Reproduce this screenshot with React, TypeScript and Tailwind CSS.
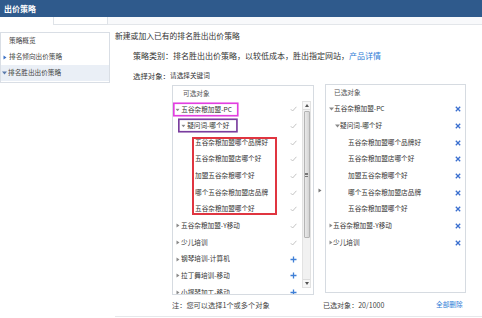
import React from "react";

const leftRows = [
  "五谷杂粮加盟哪个品牌好",
  "五谷杂粮加盟店哪个好",
  "加盟五谷杂粮哪个好",
  "哪个五谷杂粮加盟店品牌",
  "五谷杂粮加盟哪个好",
];

const moreRows = [
  { text: "五谷杂粮加盟-Y移动", added: true },
  { text: "少儿培训", added: true },
  { text: "钢琴培训-计算机", added: false },
  { text: "拉丁舞培训-移动", added: false },
  { text: "小提琴加工-移动", added: false },
];

function T({ children }: { children: React.ReactNode }) {
  return (
    <span className="inline-block origin-left scale-[0.83] whitespace-nowrap text-[8px] leading-[10px]">
      {children}
    </span>
  );
}

function TriDown({ color = "#8a8a8a" }: { color?: string }) {
  return (
    <svg width="5" height="4" viewBox="0 0 5 4" className="shrink-0">
      <polygon points="0,0.5 5,0.5 2.5,3.5" fill={color} />
    </svg>
  );
}

function TriRight({ color = "#8a8a8a" }: { color?: string }) {
  return (
    <svg width="4" height="5" viewBox="0 0 4 5" className="shrink-0">
      <polygon points="0.5,0.5 3.5,2.5 0.5,4.5" fill={color} />
    </svg>
  );
}

function Check() {
  return (
    <svg width="7" height="6" viewBox="0 0 7 6" className="shrink-0">
      <polyline points="0.8,3.2 2.6,5 6.4,0.8" fill="none" stroke="#bdbdbd" strokeWidth="0.9" />
    </svg>
  );
}

function Plus() {
  return (
    <svg width="7" height="7" viewBox="0 0 7 7" className="shrink-0">
      <path d="M3.5 0.5V6.5M0.5 3.5H6.5" stroke="#3f7fd6" strokeWidth="1.3" />
    </svg>
  );
}

function Cross() {
  return (
    <svg width="6" height="6" viewBox="0 0 6 6" className="shrink-0">
      <path d="M0.8 0.8L5.2 5.2M5.2 0.8L0.8 5.2" stroke="#3a6fcf" strokeWidth="1.3" />
    </svg>
  );
}

function Scrollbar() {
  return (
    <div className="w-[9px] mr-[2px] mb-[6px] flex flex-col bg-[#f1f1f1] border border-[#e2e2e2]">
      <div className="h-[8px] flex items-center justify-center border-b border-[#dcdcdc] bg-[#f7f7f7]">
        <svg width="4" height="3" viewBox="0 0 4 3">
          <polygon points="0,3 4,3 2,0" fill="#555" />
        </svg>
      </div>
      <div className="flex-1 flex flex-col pt-[1px]">
        <div className="h-[127px] mx-[0.5px] border border-[#b4b4b4] rounded-[1px] bg-gradient-to-r from-[#e9e9e9] to-[#d4d4d4] flex items-center justify-center">
          <div className="flex flex-col gap-[1px]">
            <div className="w-[3px] h-[0.6px] bg-[#777]" />
            <div className="w-[3px] h-[0.6px] bg-[#777]" />
            <div className="w-[3px] h-[0.6px] bg-[#777]" />
          </div>
        </div>
      </div>
      <div className="h-[8px] flex items-center justify-center border-t border-[#dcdcdc] bg-[#f7f7f7]">
        <svg width="4" height="3" viewBox="0 0 4 3">
          <polygon points="0,0 4,0 2,3" fill="#555" />
        </svg>
      </div>
    </div>
  );
}

export default function App() {
  return (
    <div className="w-[482px] h-[318px] overflow-hidden bg-white text-[#444] font-['Noto_Sans_CJK_SC','Noto_Sans',sans-serif]">
      {/* title bar */}
      <div className="h-[17px] bg-[#2f5a8c] flex items-center pl-[4px]">
        <span className="text-white font-bold text-[8px] leading-none">出价策略</span>
      </div>
      <div className="h-[8px] flex">
        <div className="w-[53px] bg-white" />
        <div className="w-[55px] border-x border-b border-[#dfe3e8] bg-white" />
        <div className="flex-1 bg-[#f8f9fb] border-b border-[#e3e6ea]" />
      </div>

      <div className="flex items-start">
        {/* side menu */}
        <div className="mt-[7px] w-[110px] border border-[#d9dee5]">
          <div className="h-[16px] flex items-center pl-[8px]">
            <T>策略概览</T>
          </div>
          <div className="h-[16px] flex items-center pl-[2px] gap-[2px]">
            <TriRight color="#3a6fc4" />
            <T>排名倾向出价策略</T>
          </div>
          <div className="h-[16px] flex items-center pl-[1px] gap-[1px] bg-[#eaeff6] mb-[1px]">
            <TriDown color="#5b7bab" />
            <T>排名胜出出价策略</T>
          </div>
        </div>

        {/* main */}
        <div className="ml-[5px] flex-1 pt-[5px] text-[#333]">
          <div className="h-[12px] leading-[12px] text-[7.8px]">新建或加入已有的排名胜出出价策略</div>
          <div className="mt-[8px] h-[12px] leading-[12px] text-[8px] pl-[18px]">
            策略类别：排名胜出出价策略，以较低成本，胜出指定网站，
            <span className="text-[#2d7bd6]">产品详情</span>
          </div>
          <div className="mt-[8px] h-[12px] flex items-center text-[8px] pl-[18px]">
            <span className="text-[7.4px]">选择对象：</span>
            <T>请选择关键词</T>
          </div>

          <div className="mt-[3px] flex pl-[57px] text-[8px]">
            {/* available */}
            <div className="w-[142px] h-[210px] border border-[#d6dbe1] flex flex-col overflow-hidden">
              <div className="h-[15px] flex items-center pl-[10px] text-[#555]">
                <T>可选对象</T>
              </div>
              <div className="flex-1 flex min-h-0">
                <div className="flex-1 overflow-hidden">
                  <div className="h-[16.67px] flex items-center justify-between pr-[5px]">
                    <span className="inline-flex items-center gap-[2px] h-[17px] border-2 border-[#e23fe0] pl-[1px] pr-[6px] origin-left scale-[0.83] whitespace-nowrap">
                      <TriDown />
                      <span>五谷杂粮加盟-PC</span>
                    </span>
                    <Check />
                  </div>
                  <div className="h-[16.67px] flex items-center justify-between pl-[5px] pr-[5px]">
                    <span className="inline-flex items-center gap-[2px] h-[17px] border-2 border-[#7a3d9e] pl-[2px] pr-[8px] origin-left scale-[0.83] whitespace-nowrap">
                      <TriDown />
                      <span>疑问词-哪个好</span>
                    </span>
                    <Check />
                  </div>
                  <div className="relative">
                    {leftRows.map((r) => (
                      <div key={r} className="h-[16.67px] flex items-center justify-between pl-[22px] pr-[5px]">
                        <T>{r}</T>
                        <Check />
                      </div>
                    ))}
                    <div className="absolute left-[19px] top-[3px] w-[85px] h-[78px] border-2 border-[#e03540]" />
                  </div>
                  {moreRows.map((r) => (
                    <div key={r.text} className="h-[16.67px] flex items-center justify-between pl-[3px] pr-[5px]">
                      <span className="flex items-center gap-[1px]">
                        <TriRight />
                        <T>{r.text}</T>
                      </span>
                      {r.added ? <Check /> : <Plus />}
                    </div>
                  ))}
                </div>
                <Scrollbar />
              </div>
            </div>

            <div className="w-[11px] h-[210px] flex items-center justify-center">
              <TriRight color="#777" />
            </div>

            {/* selected */}
            <div className="w-[141px] h-[209px] -mt-[1px] border border-[#d6dbe1] flex flex-col overflow-hidden">
              <div className="h-[16px] flex items-center pl-[8px] text-[#555]">
                <T>已选对象</T>
              </div>
              <div className="h-[16.67px] flex items-center justify-between pl-[3px] pr-[4px]">
                <span className="flex items-center gap-[0px]">
                  <TriDown />
                  <T>五谷杂粮加盟-PC</T>
                </span>
                <Cross />
              </div>
              <div className="h-[16.67px] flex items-center justify-between pl-[9px] pr-[4px]">
                <span className="flex items-center gap-[0px]">
                  <TriDown />
                  <T>疑问词-哪个好</T>
                </span>
                <Cross />
              </div>
              {leftRows.map((r) => (
                <div key={r} className="h-[16.67px] flex items-center justify-between pl-[22px] pr-[4px]">
                  <T>{r}</T>
                  <Cross />
                </div>
              ))}
              {moreRows.slice(0, 2).map((r) => (
                <div key={r.text} className="h-[16.67px] flex items-center justify-between pl-[3px] pr-[4px]">
                  <span className="flex items-center gap-[0px]">
                    <TriRight />
                    <T>{r.text}</T>
                  </span>
                  <Cross />
                </div>
              ))}
            </div>
          </div>

          <div className="mt-[4px] h-[12px] flex items-center pl-[57px] text-[#444]">
            <span className="w-[151px] flex">
              <span className="inline-block origin-left scale-[0.9] whitespace-nowrap text-[8px]">注：您可以选择1个或多个对象</span>
            </span>
            <span className="w-[113px] flex">
              <span className="inline-block origin-left scale-[0.88] whitespace-nowrap text-[8px]">已选对象：20/1000</span>
            </span>
            <span className="flex">
              <T>
                <span className="text-[#2d7bd6]">全部删除</span>
              </T>
            </span>
          </div>
          <div className="mt-[5px] border-t border-[#e6e8eb]" />
        </div>
      </div>
    </div>
  );
}
